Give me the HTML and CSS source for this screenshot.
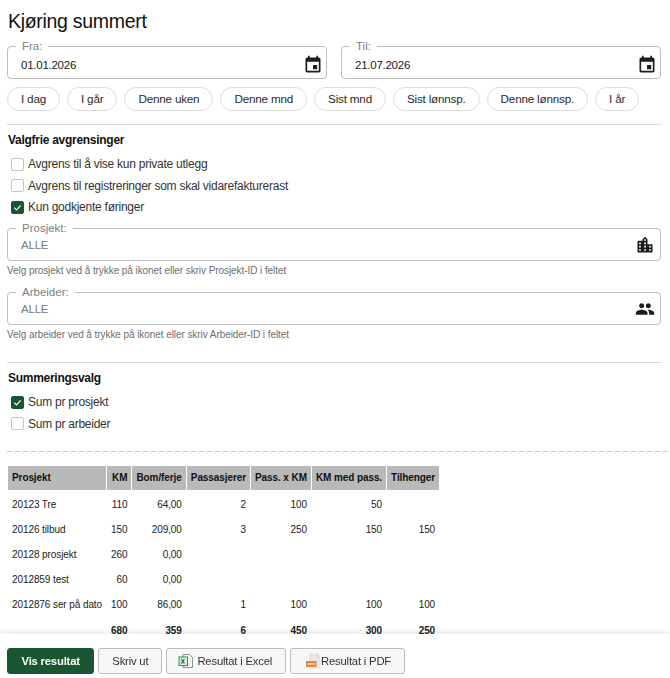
FILE: index.html
```html
<!DOCTYPE html>
<html lang="no">
<head>
<meta charset="utf-8">
<title>Kjøring summert</title>
<link rel="stylesheet" href="styles.css">
</head>
<body>
<main class="page">
  <h1 class="title">Kjøring summert</h1>
  <div class="dates">
    <fieldset class="field field-date">
      <legend class="legend">Fra:</legend>
      <span class="value">01.01.2026</span>
      <svg class="icon" viewBox="0 0 24 24"><path d="M17 12h-5v5h5v-5zM16 1v2H8V1H6v2H5c-1.11 0-1.99.9-1.99 2L3 19c0 1.1.89 2 2 2h14c1.1 0 2-.9 2-2V5c0-1.1-.9-2-2-2h-1V1h-2zm3 18H5V8h14v11z"/></svg>
    </fieldset>
    <fieldset class="field field-date">
      <legend class="legend">Til:</legend>
      <span class="value">21.07.2026</span>
      <svg class="icon" viewBox="0 0 24 24"><path d="M17 12h-5v5h5v-5zM16 1v2H8V1H6v2H5c-1.11 0-1.99.9-1.99 2L3 19c0 1.1.89 2 2 2h14c1.1 0 2-.9 2-2V5c0-1.1-.9-2-2-2h-1V1h-2zm3 18H5V8h14v11z"/></svg>
    </fieldset>
  </div>
  <div class="chips">
    <span class="chip">I dag</span>
    <span class="chip">I går</span>
    <span class="chip">Denne uken</span>
    <span class="chip">Denne mnd</span>
    <span class="chip">Sist mnd</span>
    <span class="chip">Sist lønnsp.</span>
    <span class="chip">Denne lønnsp.</span>
    <span class="chip">I år</span>
  </div>
  <hr class="rule rule-first">
  <h2 class="heading">Valgfrie avgrensinger</h2>
  <div class="checks">
    <label class="check"><span class="box"></span>Avgrens til å vise kun private utlegg</label>
    <label class="check"><span class="box"></span>Avgrens til registreringer som skal vidarefakturerast</label>
    <label class="check"><span class="box box-on"><svg viewBox="0 0 12 12"><path d="M2.500 6.200l2.400 2.400 4.600-5" fill="none" stroke="#fff" stroke-width="1.300"/></svg></span>Kun godkjente føringer</label>
  </div>
  <fieldset class="field field-wide">
    <legend class="legend">Prosjekt:</legend>
    <span class="value value-muted">ALLE</span>
    <svg class="icon" viewBox="0 0 24 24"><path d="M15 11V5l-3-3-3 3v2H3v14h18V11h-6zm-8 8H5v-2h2v2zm0-4H5v-2h2v2zm0-4H5V9h2v2zm6 8h-2v-2h2v2zm0-4h-2v-2h2v2zm0-4h-2V9h2v2zm0-4h-2V5h2v2zm6 12h-2v-2h2v2zm0-4h-2v-2h2v2z"/></svg>
  </fieldset>
  <p class="help">Velg prosjekt ved å trykke på ikonet eller skriv Prosjekt-ID i feltet</p>
  <fieldset class="field field-wide field-second">
    <legend class="legend">Arbeider:</legend>
    <span class="value value-muted">ALLE</span>
    <svg class="icon" viewBox="0 0 24 24"><path d="M16 11c1.660 0 2.990-1.340 2.990-3S17.660 5 16 5c-1.660 0-3 1.340-3 3s1.340 3 3 3zm-8 0c1.660 0 2.990-1.340 2.990-3S9.660 5 8 5C6.340 5 5 6.340 5 8s1.340 3 3 3zm0 2c-2.330 0-7 1.170-7 3.500V19h14v-2.500c0-2.330-4.670-3.500-7-3.500zm8 0c-.29 0-.62.02-.97.05 1.160.84 1.970 1.970 1.970 3.450V19h6v-2.500c0-2.330-4.670-3.500-7-3.500z"/></svg>
  </fieldset>
  <p class="help">Velg arbeider ved å trykke på ikonet eller skriv Arbeider-ID i feltet</p>
  <hr class="rule rule-second">
  <h2 class="heading">Summeringsvalg</h2>
  <div class="checks">
    <label class="check"><span class="box box-on"><svg viewBox="0 0 12 12"><path d="M2.500 6.200l2.400 2.400 4.600-5" fill="none" stroke="#fff" stroke-width="1.300"/></svg></span>Sum pr prosjekt</label>
    <label class="check"><span class="box"></span>Sum pr arbeider</label>
  </div>
  <hr class="dashed">
  <table class="results">
    <thead>
      <tr><th class="left">Prosjekt</th><th>KM</th><th>Bom/ferje</th><th>Passasjerer</th><th>Pass. x KM</th><th>KM med pass.</th><th>Tilhenger</th></tr>
    </thead>
    <tbody>
      <tr><td class="left">20123 Tre</td><td>110</td><td>64,00</td><td>2</td><td>100</td><td>50</td><td></td></tr>
      <tr><td class="left">20126 tilbud</td><td>150</td><td>209,00</td><td>3</td><td>250</td><td>150</td><td>150</td></tr>
      <tr><td class="left">20128 prosjekt</td><td>260</td><td>0,00</td><td></td><td></td><td></td><td></td></tr>
      <tr><td class="left">2012859 test</td><td>60</td><td>0,00</td><td></td><td></td><td></td><td></td></tr>
      <tr><td class="left">2012876 ser på dato</td><td>100</td><td>86,00</td><td>1</td><td>100</td><td>100</td><td>100</td></tr>
      <tr class="total"><td class="left"></td><td>680</td><td>359</td><td>6</td><td>450</td><td>300</td><td>250</td></tr>
    </tbody>
  </table>
</main>
<footer class="actions">
  <button class="btn btn-primary">Vis resultat</button>
  <button class="btn">Skriv ut</button>
  <button class="btn btn-excel">
    <svg class="file" viewBox="0 0 16 16"><path d="M5 1.500h6.500l3 3v10H5z" fill="#f4f6f4" stroke="#7f9a8b"/><rect x="1" y="4" width="8.500" height="8.500" fill="#dff0e4" stroke="#2f8a55"/><path d="M3.200 6l3.200 4.600M6.400 6L3.200 10.600" stroke="#1d6b3d" stroke-width="1.100"/></svg>
    Resultat i Excel
  </button>
  <button class="btn btn-pdf">
    <svg class="file" viewBox="0 0 16 16"><path d="M4 .5h8l3 3v12H4z" fill="#e6e6e6"/><path d="M12 .5l3 3h-3z" fill="#cfcfcf"/><rect x="1" y="8" width="10.500" height="6" fill="#dc8a4a"/><path d="M2.500 11h7.500" stroke="#fbe6d2" stroke-width="1.400" stroke-dasharray="2 .6"/></svg>
    Resultat i PDF
  </button>
</footer>
</body>
</html>
```
FILE: styles.css
```css
* { box-sizing: border-box; }
html, body { margin: 0; height: 100%; overflow: hidden; background: #fff; }
body { font-family: "Liberation Sans", Arial, sans-serif; font-size: 12px; letter-spacing: -.25px; color: #212121; }
.page { padding: 10px 9px 0 7px; }
.title { margin: 0; font-size: 19.5px; line-height: 23px; letter-spacing: -.3px; font-weight: 400; color: #111; padding-left: 1px; }

.dates { display: grid; grid-template-columns: 320px 320px; column-gap: 14px; margin-top: 7px; }
.field {
  margin: 0; padding: 0 5px 0 8px; min-width: 0; height: 39px;
  border: 1px solid #bdbdbd; border-radius: 4px;
  display: flex; align-items: center; justify-content: space-between;
}
.field-date { padding: 0 3px 1px 8px; }
.legend { padding: 0 6px; font-size: 11.5px; line-height: 12px; height: 12px; letter-spacing: 0; color: #808080; }
.value { display: block; margin-left: 5px; font-size: 11.5px; line-height: 14px; letter-spacing: -.25px; color: #222; }
.value-muted { color: #7d7d7d; letter-spacing: -.2px; }
.icon { width: 20px; height: 20px; flex: none; fill: #1d1d1d; }

.chips { display: flex; gap: 7px; margin-top: 8px; }
.chip {
  height: 24px; padding: 0 13px; border: 1px solid #dcdcdc; border-radius: 12px;
  font-size: 11.7px; letter-spacing: -.2px; line-height: 22px; color: #2b2b2b; white-space: nowrap;
}

.rule { border: 0; border-top: 1px solid #d9d9d9; margin: 0; }
.rule-first { margin-top: 13px; }
.rule-second { margin-top: 21px; }
.heading { margin: 8px 0 0 1px; font-size: 12px; line-height: 14px; letter-spacing: -.28px; font-weight: 700; color: #111; }
.checks { display: flex; flex-direction: column; gap: 7.5px; margin-top: 10px; padding-left: 4px; }
.check { display: flex; align-items: center; gap: 4px; height: 14px; color: #333; }
.box { width: 13px; height: 13px; flex: none; border: 1px solid #c4c4c4; border-radius: 2px; background: #fff; }
.box-on { background: #1a5632; border-color: #1a5632; }
.box-on svg { display: block; width: 11px; height: 11px; }

.field-wide { margin-top: 8px; padding-bottom: 4px; }
.field-second { margin-top: 9px; }
.help { margin: 4px 0 0; font-size: 10px; letter-spacing: -.07px; line-height: 12px; color: #6e6e6e; }

.dashed {
  border: 0; height: 1px; margin: 20px -9px 0 0;
  background: repeating-linear-gradient(90deg, #c8c8c8 0 5px, transparent 5px 8px);
}

.results { border-collapse: separate; border-spacing: 1px 0; margin: 14px 0 0; font-size: 10px; letter-spacing: -.09px; color: #222; }
.results th { height: 24px; padding: 0 4px; background: #b9b9b9; font-weight: 700; text-align: right; color: #111; white-space: nowrap; }
.results td { height: 25px; padding: 5px 4px 0; text-align: right; white-space: nowrap; }
.results .left { text-align: left; }
.results .total td { padding-top: 7px; font-weight: 700; }

.actions {
  position: fixed; left: 0; right: 0; bottom: 0; height: 44px;
  display: flex; align-items: flex-start; gap: 4px; padding: 14px 7px 0;
  background: #fff; box-shadow: 0 -3px 4px rgba(0, 0, 0, .07);
}
.btn {
  height: 26px; padding: 0 13px; display: flex; align-items: center; gap: 4px;
  font: 11.3px "Liberation Sans", Arial, sans-serif; letter-spacing: -.2px; color: #333;
  background: #f7f7f7; border: 1px solid #bdbdbd; border-radius: 3px;
}
.btn-primary { padding: 0 13.5px; background: #1a5632; border-color: #1a5632; color: #fff; font-weight: 700; }
.btn-excel { padding-left: 11px; gap: 3px; }
.btn-pdf { padding-left: 14px; gap: 0; }
.file { width: 16px; height: 16px; flex: none; }
```
